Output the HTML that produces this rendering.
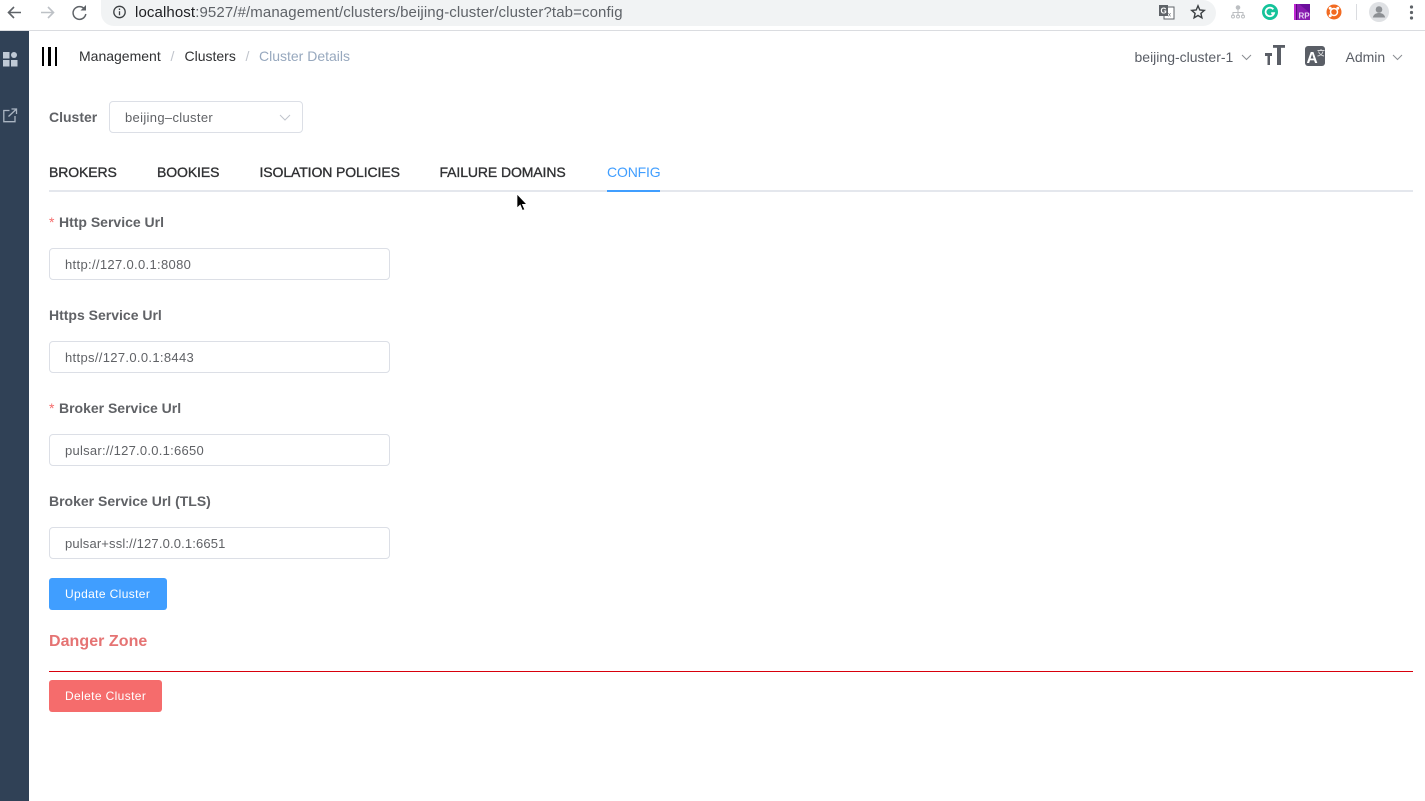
<!DOCTYPE html>
<html><head><meta charset="utf-8">
<style>
*{box-sizing:border-box}
html,body{margin:0;padding:0;width:1425px;height:801px;overflow:hidden;background:#fff;font-family:"Liberation Sans",sans-serif}
.a{position:absolute;white-space:nowrap}
svg{position:absolute;overflow:visible}
.tab{position:absolute;top:164px;font-size:14px;line-height:16px;color:#303133;-webkit-text-stroke:.35px #303133;letter-spacing:-.1px}
.lbl{position:absolute;left:49px;font-size:14px;font-weight:bold;color:#606266;line-height:16px}
.lbl i{color:#f56c6c;font-style:normal;font-weight:normal;margin-right:4.500px}
.inp{position:absolute;left:49px;width:341px;height:32px;border:1px solid #dcdfe6;border-radius:4px;font-size:13px;line-height:32px;padding-left:15px;color:#606266}
.btn{position:absolute;left:49px;height:32px;border-radius:3px;color:#fff;font-size:12px;line-height:32px;padding-left:16px;letter-spacing:.37px}
</style></head><body>
<!-- browser bar -->
<div class="a" style="left:0;top:0;width:1425px;height:31px;background:#fff;border-bottom:1px solid #dadce0"></div>
<div class="a" style="left:101px;top:0;width:1115px;height:26px;background:#f1f3f4;border-radius:0 13px 13px 13px"></div>
<svg style="left:0;top:0" width="100" height="30" fill="none">
<path d="M21 12.500H9M14 7l-5.500 5.500L14 18" stroke="#5f6368" stroke-width="1.600"/>
<path d="M41 12.500h12M48 7l5.500 5.500L48 18" stroke="#bdc1c6" stroke-width="1.600"/>
<path d="M84.500 9a6.400 6.400 0 1 0 1.300 5" stroke="#5f6368" stroke-width="1.500"/><path d="M86 5v5.500h-5.500z" fill="#5f6368"/>
</svg>
<svg style="left:112px;top:5px" width="16" height="16" fill="none"><circle cx="7.500" cy="7" r="5.700" stroke="#3c4043" stroke-width="1.300"/><path d="M7.500 6.300v4M7.500 3.500v1.500" stroke="#3c4043" stroke-width="1.300"/></svg>
<div class="a" style="left:135px;top:4px;font-size:15px;line-height:17px;color:#5f6368;letter-spacing:.11px"><span style="color:#202124">localhost</span>:9527/#/management/clusters/beijing-cluster/cluster?tab=config</div>
<svg style="left:1158px;top:4px" width="18" height="18"><rect x="6" y="3" width="10" height="12" fill="#fff" stroke="#5f6368"/><rect x="1" y="1" width="9" height="11" fill="#5f6368"/><text x="2.500" y="9.500" font-size="8" font-weight="bold" fill="#fff" font-family="Liberation Sans">G</text><text x="10" y="12.500" font-size="6" fill="#5f6368" font-family="Liberation Sans">x</text></svg>
<svg style="left:1190px;top:4px" width="16" height="16" fill="none"><path d="M8 1.800l1.800 4.200 4.500.4-3.400 3 1 4.400L8 11.500l-3.900 2.300 1-4.400-3.400-3 4.500-.4z" stroke="#3c4043" stroke-width="1.400"/></svg>
<svg style="left:1230px;top:5px" width="16" height="14" fill="none" stroke="#bcbfc2"><circle cx="8" cy="2.500" r="1.800" fill="#bcbfc2"/><path d="M8 4v3M3 11V7.500h10V11M8 7v4"/><circle cx="3" cy="11.500" r="1.500"/><circle cx="8" cy="11.500" r="1.500"/><circle cx="13" cy="11.500" r="1.500"/></svg>
<svg style="left:1262px;top:4px" width="16" height="16" fill="none"><circle cx="8" cy="8" r="8" fill="#15c39a"/><path d="M11.300 5.300A4.300 4.300 0 1 0 12 9.200H9.200" stroke="#fff" stroke-width="1.800"/></svg>
<svg style="left:1294px;top:4px" width="16" height="16"><rect width="16" height="16" fill="#8a1bb0"/><rect x="0" width="2" height="16" fill="#c026d3"/><rect x="2" width="1" height="16" fill="#5a0a80"/><path d="M5 0h11v9z" fill="#6b0f9c"/><text x="4.500" y="14.500" font-size="8" font-weight="bold" fill="#e9d5f5" font-family="Liberation Sans">RP</text></svg>
<svg style="left:1326px;top:4px" width="16" height="16" fill="none"><circle cx="8" cy="8" r="7.500" fill="#f26a21"/><circle cx="8" cy="8" r="3.500" stroke="#fff" stroke-width="1.500"/><circle cx="4.200" cy="4.200" r="1.500" fill="#fff"/><circle cx="11.800" cy="4.200" r="1.500" fill="#fff"/><circle cx="4.200" cy="11.800" r="1.500" fill="#fff"/></svg>
<div class="a" style="left:1356px;top:4px;width:1px;height:16px;background:#dadce0"></div>
<svg style="left:1369px;top:2px" width="20" height="20"><circle cx="10" cy="10" r="10" fill="#dfe1e4"/><circle cx="10" cy="7.500" r="3.300" fill="#8d9094"/><path d="M3.800 15.500c1-3.600 3.500-4.500 6.200-4.500s5.200.9 6.200 4.500z" fill="#8d9094"/></svg>
<svg style="left:1409px;top:5px" width="6" height="16" fill="#5f6368"><circle cx="2.500" cy="2" r="1.600"/><circle cx="2.500" cy="7.500" r="1.600"/><circle cx="2.500" cy="13" r="1.600"/></svg>

<!-- sidebar -->
<div class="a" style="left:0;top:31px;width:29px;height:770px;background:#304156"></div>
<svg style="left:3px;top:52px" width="16" height="16" fill="#bfc9d5"><rect width="6.500" height="6.500" y="0"/><circle cx="11" cy="3" r="3"/><rect y="8" width="6.500" height="6.500"/><rect x="8" y="8" width="6.500" height="6.500"/></svg>
<svg style="left:3px;top:108px" width="15" height="15" fill="none" stroke="#aab5c2" stroke-width="1.300"><path d="M6.500 2.500H.8v11.200H12V8"/><path d="M5.500 8.500L13 1.500M8.500 1h5v5"/></svg>

<!-- navbar -->
<div class="a" style="left:41.500px;top:46.500px;width:2.500px;height:19px;background:#000"></div>
<div class="a" style="left:48px;top:46.500px;width:2.500px;height:19px;background:#000"></div>
<div class="a" style="left:54.500px;top:46.500px;width:2.500px;height:19px;background:#000"></div>
<div class="a" style="left:79px;top:48px;font-size:14px;line-height:16px;color:#303133">Management</div>
<div class="a" style="left:170.500px;top:48px;font-size:14px;line-height:16px;color:#c0c4cc">/</div>
<div class="a" style="left:184.500px;top:48px;font-size:14px;line-height:16px;color:#303133">Clusters</div>
<div class="a" style="left:245.500px;top:48px;font-size:14px;line-height:16px;color:#c0c4cc">/</div>
<div class="a" style="left:259px;top:48px;font-size:14px;line-height:16px;color:#97a8be">Cluster Details</div>

<div class="a" style="left:1134.500px;top:49px;font-size:14px;line-height:16px;color:#5a5e66">beijing-cluster-1</div>
<svg style="left:1241px;top:54px" width="11" height="7" fill="none" stroke="#8a8d92"><path d="M1 1l4.500 4.500L10 1"/></svg>
<svg style="left:1265px;top:45px" width="20" height="20" fill="#5a5e66"><rect x="0" y="8" width="7" height="3"/><rect x="2.500" y="8" width="2.500" height="12"/><rect x="8" y="0" width="12" height="2.800"/><rect x="12" y="0" width="4" height="20"/></svg>
<svg style="left:1305px;top:46px" width="20" height="20"><rect width="20" height="20" rx="3" fill="#5a5e66"/><text x="1.500" y="17" font-size="15.500" font-weight="bold" fill="#fff" font-family="Liberation Sans">A</text><path d="M12.500 4.500h7M16 3v1.500M13.500 5.500c1 3 3 4 5.500 4.500M18 5.500c-.8 3-2.500 4-5.500 4.500" stroke="#d6d7d9" stroke-width=".9" fill="none"/></svg>
<div class="a" style="left:1345.500px;top:49px;font-size:14px;line-height:16px;color:#5a5e66">Admin</div>
<svg style="left:1392px;top:54px" width="11" height="7" fill="none" stroke="#8a8d92"><path d="M1 1l4.500 4.500L10 1"/></svg>

<!-- cluster select -->
<div class="a" style="left:49px;top:109px;font-size:14px;line-height:16px;font-weight:bold;color:#606266">Cluster</div>
<div class="a" style="left:109px;top:101px;width:194px;height:32px;border:1px solid #dcdfe6;border-radius:4px;font-size:13px;line-height:32px;padding-left:15px;color:#606266;letter-spacing:.33px">beijing–cluster</div>
<svg style="left:279px;top:114px" width="12" height="7" fill="none" stroke="#c0c4cc"><path d="M1 1l5 5 5-5"/></svg>

<!-- tabs -->
<div class="tab" style="left:49px">BROKERS</div>
<div class="tab" style="left:157px">BOOKIES</div>
<div class="tab" style="left:259.500px">ISOLATION POLICIES</div>
<div class="tab" style="left:439.500px">FAILURE DOMAINS</div>
<div class="tab" style="left:607px;color:#409eff;-webkit-text-stroke:0;letter-spacing:-.15px">CONFIG</div>
<div class="a" style="left:49px;top:190px;width:1364px;height:2px;background:#e4e7ed"></div>
<div class="a" style="left:607px;top:190px;width:53px;height:2px;background:#409eff"></div>
<svg style="left:516px;top:193px" width="12" height="20"><path d="M1 1v14l3.200-3 2.300 5.500 2.200-1-2.300-5.200h4.300z" fill="#000" stroke="#fff" stroke-width=".7"/></svg>

<!-- form -->
<div class="lbl" style="top:214px"><i>*</i>Http Service Url</div>
<div class="inp" style="top:248px;letter-spacing:.33px">http://127.0.0.1:8080</div>
<div class="lbl" style="top:307px">Https Service Url</div>
<div class="inp" style="top:341px;letter-spacing:.33px">https//127.0.0.1:8443</div>
<div class="lbl" style="top:400px"><i>*</i>Broker Service Url</div>
<div class="inp" style="top:434px;letter-spacing:.26px">pulsar://127.0.0.1:6650</div>
<div class="lbl" style="top:493px">Broker Service Url (TLS)</div>
<div class="inp" style="top:527px;letter-spacing:.15px">pulsar+ssl://127.0.0.1:6651</div>
<div class="btn" style="top:578px;width:118px;background:#409eff">Update Cluster</div>
<div class="a" style="left:49px;top:633px;font-size:16px;line-height:18px;font-weight:bold;color:#e57373;letter-spacing:.05px">Danger Zone</div>
<div class="a" style="left:49px;top:671px;width:1364px;height:1px;background:#d8000c"></div>
<div class="btn" style="top:680px;width:113px;background:#f56c6c">Delete Cluster</div>
</body></html>
